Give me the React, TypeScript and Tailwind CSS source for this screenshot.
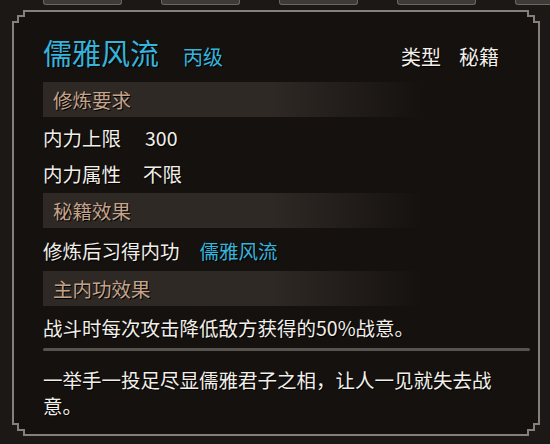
const font = { fontFamily: '"Noto Sans CJK SC", "Noto Sans", sans-serif' };

const Corner = ({ className }: { className: string }) => (
  <svg
    width="14"
    height="14"
    viewBox="0 0 14 14"
    className={`absolute ${className}`}
    shapeRendering="crispEdges"
  >
    <polygon points="0,0 13,0 13,5 7,5 7,11 0,11" fill="#1c1815" />
    <rect x="11" y="0" width="2" height="7" fill="#85807a" />
    <rect x="5" y="5" width="8" height="2" fill="#85807a" />
    <rect x="5" y="5" width="2" height="8" fill="#85807a" />
    <rect x="0" y="11" width="7" height="2" fill="#85807a" />
  </svg>
);

const SectionBar = ({ title }: { title: string }) => (
  <div className="h-[35px] w-[380px] flex items-center pl-[10px] bg-linear-to-r from-[#2e2925] from-60% to-[#2e2925]/0">
    <span className="text-[19.5px] leading-[20px] text-[#c4a38a] [text-shadow:1px_1px_0_#000]">
      {title}
    </span>
  </div>
);

export default function App() {
  return (
    <div
      className="w-[550px] h-[444px] bg-[#1c1815] flex flex-col overflow-hidden"
      style={font}
    >
      <div className="h-[10px] flex gap-[39px] pl-[43px]">
        {[0, 1, 2, 3, 4].map((i) => (
          <div
            key={i}
            className="w-[79px] shrink-0 h-[5px] rounded-b-[3px] bg-[#3e3a36] border-x border-b border-[#6a6661]"
          />
        ))}
      </div>

      <div className="relative ml-[12px] mr-[10px] h-[426px] border-2 border-[#85807a] bg-[#15110e] pl-[29px] pr-[8px] pt-[26px] flex flex-col text-[#f2efe9]">
        <Corner className="-top-[2px] -left-[2px]" />
        <Corner className="-top-[2px] -right-[2px] rotate-90" />
        <Corner className="-bottom-[2px] -right-[2px] rotate-180" />
        <Corner className="-bottom-[2px] -left-[2px] -rotate-90" />

        <div className="flex items-end h-[29px] [text-shadow:1px_1px_0_#000]">
          <span className="text-[29px] leading-none text-[#36b4dc]">儒雅风流</span>
          <span className="ml-[24px] text-[20px] leading-none text-[#36b4dc]">丙级</span>
          <span className="ml-auto text-[20px] leading-none">类型</span>
          <span className="ml-[18px] mr-[31px] text-[20px] leading-none">秘籍</span>
        </div>

        <div className="mt-[15px]">
          <SectionBar title="修炼要求" />
        </div>

        <div className="mt-[11px] flex h-[20px] text-[19.5px] leading-[20px] [text-shadow:1px_1px_0_#000]">
          <span>内力上限</span>
          <span className="ml-[24px]">300</span>
        </div>
        <div className="mt-[16px] flex h-[20px] text-[19.5px] leading-[20px] [text-shadow:1px_1px_0_#000]">
          <span>内力属性</span>
          <span className="ml-[22px]">不限</span>
        </div>

        <div className="mt-[9px]">
          <SectionBar title="秘籍效果" />
        </div>

        <div className="mt-[13px] flex h-[20px] text-[19.5px] leading-[20px] [text-shadow:1px_1px_0_#000]">
          <span>修炼后习得内功</span>
          <span className="ml-[20px] text-[#36b4dc]">儒雅风流</span>
        </div>

        <div className="mt-[10px]">
          <SectionBar title="主内功效果" />
        </div>

        <div className="mt-[12px] h-[20px] text-[19.5px] leading-[20px] [text-shadow:1px_1px_0_#000]">
          战斗时每次攻击降低敌方获得的50%战意。
        </div>

        <div className="mt-[10px] h-[3px] rounded-full bg-[#57534e]" />

        <p className="mt-[16px] w-[460px] text-[19.5px] leading-[26px] [text-shadow:1px_1px_0_#000]">
          一举手一投足尽显儒雅君子之相，让人一见就失去战意。
        </p>
      </div>
    </div>
  );
}
